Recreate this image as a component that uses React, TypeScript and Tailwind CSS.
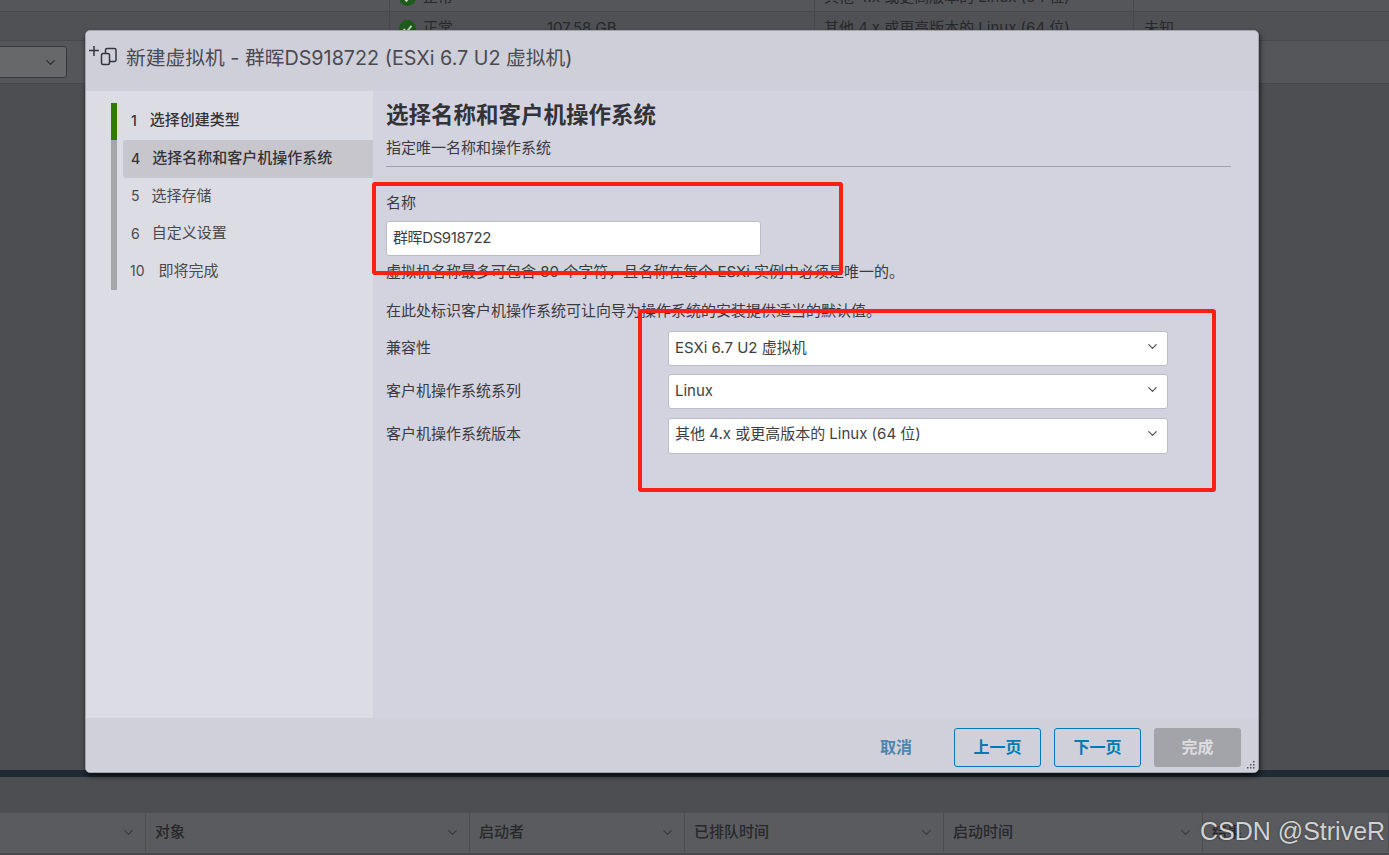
import React from 'react';
import { ChevronDown } from 'lucide-react';

const navSteps = [
  { num: '1', label: '选择创建类型', bar: 'border-[#317a00]', rowClass: 'h-[37px]', innerClass: 'pl-[14px] gap-[13px] pb-[2px]', active: false, strong: true },
  { num: '4', label: '选择名称和客户机操作系统', bar: 'border-[#a6a6aa]', rowClass: 'h-[37.5px]', innerClass: 'ml-[6px] pl-[8px] gap-[12px] pb-[1px]', active: true, strong: true },
  { num: '5', label: '选择存储', bar: 'border-[#a6a6aa]', rowClass: 'h-[37.5px]', innerClass: 'ml-[6px] pl-[8px] gap-[12px] pb-[1px]', active: false, strong: false },
  { num: '6', label: '自定义设置', bar: 'border-[#a6a6aa]', rowClass: 'h-[37.5px]', innerClass: 'ml-[6px] pl-[8px] gap-[12px] pb-[1px]', active: false, strong: false },
  { num: '10', label: '即将完成', bar: 'border-[#a6a6aa]', rowClass: 'h-[37.5px]', innerClass: 'ml-[6px] pl-[7px] gap-[14px] pb-[1px]', active: false, strong: false },
];

const selects = [
  { label: '兼容性', value: 'ESXi 6.7 U2 虚拟机', rowClass: 'h-[35px] mb-[8px]', textClass: '' },
  { label: '客户机操作系统系列', value: 'Linux', rowClass: 'h-[35px] mb-[9px]', textClass: '' },
  { label: '客户机操作系统版本', value: '其他 4.x 或更高版本的 Linux (64 位)', rowClass: 'h-[36px]', textClass: 'mb-[3px]' },
];

const CheckDot = () => (
  <svg width="17" height="17" viewBox="0 0 17 17" className="shrink-0">
    <circle cx="8.5" cy="8.5" r="8.5" fill="#1e5a1c" />
    <path d="M4.5 8.8l3 3 5-6" fill="none" stroke="#c8d4c4" strokeWidth="1.8" />
  </svg>
);

const VmIcon = () => (
  <svg width="28" height="24" viewBox="0 0 28 24" fill="none" stroke="#34343a" strokeWidth="1.5" className="mb-[2px] shrink-0">
    <path d="M0 4.5h10M5 0v10" />
    <rect x="12.5" y="7.5" width="8" height="11" rx="1.5" />
    <path d="M16.5 7.5V4a1.5 1.5 0 0 1 1.5-1.5h7.5a1.5 1.5 0 0 1 1.5 1.5v10a1.5 1.5 0 0 1-1.5 1.5h-5" />
  </svg>
);

const Grip = () => (
  <svg width="10" height="10" viewBox="0 0 10 10" fill="#55565a" className="absolute bottom-[2px] right-[2px]">
    <rect x="7" y="1" width="1.5" height="1.5" />
    <rect x="4" y="4" width="1.5" height="1.5" />
    <rect x="7" y="4" width="1.5" height="1.5" />
    <rect x="1" y="7" width="1.5" height="1.5" />
    <rect x="4" y="7" width="1.5" height="1.5" />
    <rect x="7" y="7" width="1.5" height="1.5" />
  </svg>
);

const TableRow = ({ className, clip }: { className: string; clip: boolean }) => (
  <div className={`flex overflow-hidden border-b border-[#48494d] text-[15px] text-[#27282b] ${className}`}>
    <div className="w-[389px] shrink-0" />
    <div className="flex w-[425px] shrink-0 border-l border-[#47484c]">
      <div className={`flex h-[29px] items-center pl-[9px] ${clip ? 'mt-[-17px]' : 'mt-[2px]'}`}>
        <CheckDot />
        <span className="ml-[7px] w-[124px]">正常</span>
        {!clip && <span>107.58 GB</span>}
      </div>
    </div>
    <div className="flex w-[319px] shrink-0 border-l border-[#47484c]">
      <div className={`flex h-[29px] items-center pl-[9px] ${clip ? 'mt-[-17px]' : 'mt-[2px]'}`}>其他 4.x 或更高版本的 Linux (64 位)</div>
    </div>
    <div className="flex flex-1 border-l border-[#47484c]">
      {!clip && <div className="mt-[2px] flex h-[29px] items-center pl-[10px]">未知</div>}
    </div>
  </div>
);

const columns = [
  { label: '', width: 'w-[146px]' },
  { label: '对象', width: 'w-[324px]' },
  { label: '启动者', width: 'w-[215px]' },
  { label: '已排队时间', width: 'w-[259px]' },
  { label: '启动时间', width: 'w-[259px]' },
  { label: '结果', width: 'flex-1' },
];

export default function App() {
  return (
    <div className="relative h-[855px] w-[1389px] overflow-hidden bg-[#4d4e52] [font-family:Inter,'Noto_Sans_CJK_SC',sans-serif]">
      {/* page behind the dialog */}
      <div className="flex h-full flex-col">
        <TableRow className="h-[12px] bg-[#55565a]" clip />
        <TableRow className="h-[29px] bg-[#505155]" clip={false} />
        <div className="flex h-[43px] shrink-0 items-center border-b border-[#47484c] bg-[#55565a]">
          <div className="ml-[-10px] flex h-[32px] w-[77px] items-center justify-end rounded-[3px] border border-[#36373a] bg-[#67686a] pr-[8px]">
            <ChevronDown size={15} color="#2c2d30" />
          </div>
        </div>
        <div className="flex-1" />
        <div className="h-[7px] shrink-0 bg-[#1f2a33]" />
        <div className="h-[36px] shrink-0" />
        <div className="flex h-[40px] shrink-0 bg-[#5a5b5e] pb-[1px] text-[15px] font-medium text-[#27282b]">
          {columns.map((col, i) => (
            <div key={i} className={`flex items-center justify-between border-r border-[#4c4d50] pl-[9px] pr-[9px] ${col.width}`}>
              <span>{col.label}</span>
              {i < 5 && <ChevronDown size={15} color="#39393c" />}
            </div>
          ))}
        </div>
        <div className="h-[2px] shrink-0 bg-[#48494c]" />
      </div>

      {/* dialog */}
      <div className="absolute left-[85px] top-[30px] flex h-[743px] w-[1174px] flex-col overflow-hidden rounded-[5px] border border-[#a3a4ab] bg-[#d3d3df] text-[15px] text-[#3a3a3e] shadow-[1px_3px_5px_rgba(0,0,0,0.7)]">
        <div className="flex h-[60px] shrink-0 items-center bg-[#cfcfd9] pb-[5px] pl-[3px]">
          <VmIcon />
          <h1 className="ml-[9px] text-[19.75px] font-normal text-[#4a4a50]">新建虚拟机 - 群晖DS918722 (ESXi 6.7 U2 虚拟机)</h1>
        </div>

        <div className="flex min-h-0 flex-1">
          <nav className="w-[287px] shrink-0 bg-[#dcdce5] pl-[25px] pt-[12px]">
            {navSteps.map((step) => (
              <div key={step.num} className={`flex border-l-[6px] ${step.rowClass} ${step.bar}`}>
                <div className={`flex flex-1 items-center ${step.innerClass} ${step.active ? 'rounded-l-[3px] bg-[#c6c6cc]' : ''} ${step.strong ? 'font-medium text-[#333337]' : 'text-[#4a4a4e]'}`}>
                  <span className="text-[14px]">{step.num}</span>
                  <span>{step.label}</span>
                </div>
              </div>
            ))}
          </nav>

          <div className="min-w-0 flex-1 pl-[13px] pr-[27px] pt-[8px]">
            <h2 className="text-[22.5px] font-bold leading-[32px] text-[#333337]">选择名称和客户机操作系统</h2>
            <p className="mt-[6px] leading-[22px]">指定唯一名称和操作系统</p>
            <div className="mt-[7px] border-b border-[#a0a0a8]" />

            <label className="mt-[25px] block leading-[22px]">名称</label>
            <div className="mt-[7px] flex h-[35px] w-[375px] items-center rounded-[3px] border border-[#bcbcc4] bg-white pl-[6px] tracking-[-0.4px] text-[#3f3f43]">群晖DS918722</div>
            <p className="mt-[5px] leading-[22px]">虚拟机名称最多可包含 80 个字符，且名称在每个 ESXi 实例中必须是唯一的。</p>
            <p className="mt-[17px] leading-[22px]">在此处标识客户机操作系统可让向导为操作系统的安装提供适当的默认值。</p>

            <div className="mt-[9px]">
              {selects.map((row) => (
                <div key={row.label} className={`flex items-center ${row.rowClass}`}>
                  <span className={`w-[282px] shrink-0 ${row.textClass}`}>{row.label}</span>
                  <div className="flex h-full w-[500px] items-center justify-between rounded-[3px] border border-[#bcbcc4] bg-white pl-[6px] pr-[7px] text-[#3f3f43]">
                    <span className={row.textClass}>{row.value}</span>
                    <ChevronDown size={15} className="mb-[5px]" color="#55565a" />
                  </div>
                </div>
              ))}
            </div>
          </div>
        </div>

        <div className="relative flex h-[54px] shrink-0 items-start justify-end gap-[13px] bg-[#d0d0da] pr-[17px] pt-[10px] text-[16px] font-bold">
          <button className="mr-[29px] h-[39px] pb-[2px] text-[#4a86ad]">取消</button>
          <button className="h-[39px] w-[87px] rounded-[3px] border border-[#0079b8] pb-[2px] text-[#0079b8]">上一页</button>
          <button className="h-[39px] w-[87px] rounded-[3px] border border-[#0079b8] pb-[2px] text-[#0079b8]">下一页</button>
          <button className="h-[39px] w-[87px] rounded-[3px] bg-[#a3a4a9] pb-[2px] text-[#dcdce0]">完成</button>
          <Grip />
        </div>
      </div>

      {/* red annotation boxes */}
      <div className="absolute left-[372px] top-[182px] h-[93px] w-[471px] rounded-[3px] border-[4px] border-[#fb2014]" />
      <div className="absolute left-[638px] top-[309px] h-[183px] w-[578px] rounded-[3px] border-[4px] border-[#fb2014]" />

      {/* watermark */}
      <div className="absolute left-[1200px] top-[815px] text-[25px] leading-[32px] text-[#d2d2d2] [font-family:'Liberation_Sans',sans-serif] [text-shadow:0_0_2px_#333]">CSDN @StriveR</div>
    </div>
  );
}
